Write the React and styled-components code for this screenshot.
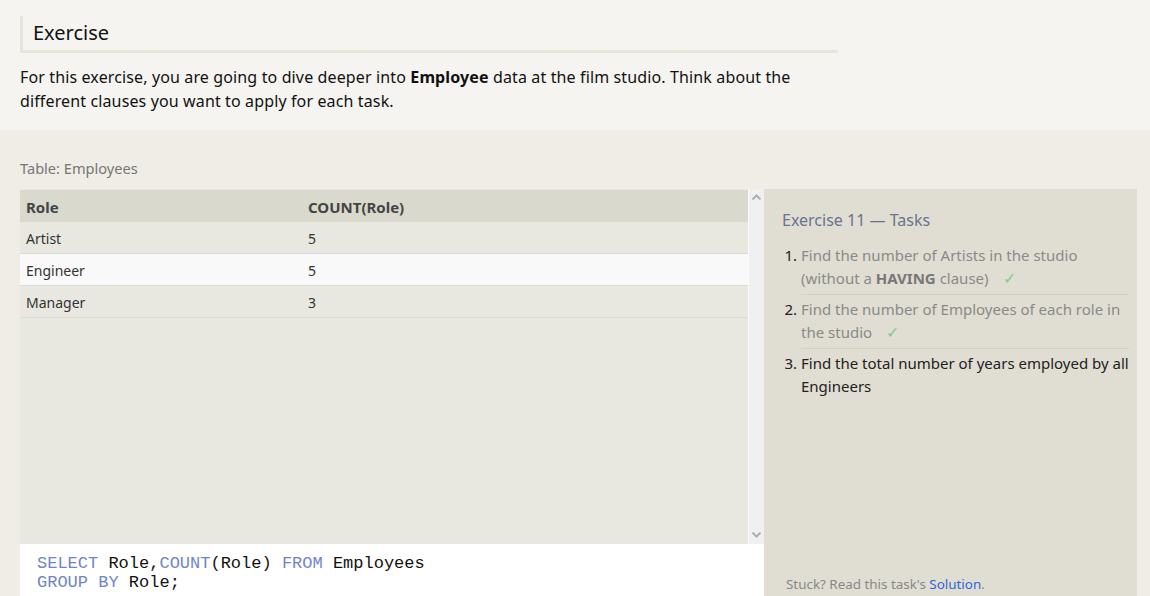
import styled, { createGlobalStyle } from "styled-components";

const rows = [
    { role: "Artist", count: 5 },
    { role: "Engineer", count: 5 },
    { role: "Manager", count: 3 },
];

//!styles----------------------------------------------
const GlobalStyle = createGlobalStyle`
    html, body {
        margin: 0;
        padding: 0;
        background: #efede6;
        font-family: "Noto Sans", "Open Sans", sans-serif;
        color: #111;
    }
`;

const Page = styled.div`
    width: 1150px;
    height: 596px;
    overflow: hidden;
`;

const Intro = styled.section`
    background: #f5f4f0;
    height: 130px;
    box-sizing: border-box;
    padding: 16px 20px 0;
`;

const Heading = styled.h2`
    width: 818px;
    box-sizing: border-box;
    margin: 0;
    padding: 4px 10px 5px;
    border-left: 3px solid #e8e6da;
    border-bottom: 3px solid #e8e6da;
    font-size: 20px;
    font-weight: 400;
    line-height: 25px;
`;

const Lead = styled.p`
    margin: 12px 0 0;
    width: 800px;
    font-size: 16px;
    letter-spacing: 0.13px;
    line-height: 24px;

    b {
        font-weight: 700;
    }
`;

const Workspace = styled.section`
    padding: 28px 13px 0 20px;
`;

const Caption = styled.div`
    font-size: 14.6px;
    line-height: 20px;
    color: #777;
    margin-bottom: 11px;
`;

const Split = styled.div`
    display: flex;
`;

const LeftCol = styled.div`
    width: 744px;
    display: flex;
    flex-direction: column;
`;

const TableWrap = styled.div`
    height: 355px;
    display: flex;
    background: #e9e8e0;
`;

const Table = styled.div`
    flex: 1;
`;

const Row = styled.div`
    display: grid;
    grid-template-columns: 282px 1fr;
    height: 32px;
    align-items: center;
    padding: 2px 0 0 6px;
    font-size: ${(p) => (p.$head ? "15px" : "14px")};
    color: ${(p) => (p.$head ? "#444" : "#333")};
    font-weight: ${(p) => (p.$head ? 700 : 400)};
    background: ${(p) =>
        p.$head ? "#dad9cd" : p.$alt ? "#f9f9f9" : "#e9e8e0"};
    border-bottom: ${(p) => (p.$head ? "none" : "1px solid #dcdcd6")};
    box-sizing: border-box;
    margin-top: ${(p) => (p.$head ? "1px" : "0")};
`;

const Scrollbar = styled.div`
    width: 16px;
    border-left: 1px solid #fafafa;
    background: #f0f0f0;
    display: flex;
    flex-direction: column;
    justify-content: space-between;
    align-items: center;
    padding: 5px 0 6px;
    box-sizing: border-box;
`;

const Editor = styled.pre`
    margin: 0;
    background: #fff;
    height: 60px;
    padding: 10px 17px 0;
    font-family: "Liberation Mono", "Courier New", monospace;
    font-size: 17px;
    line-height: 19px;
    color: #111;
`;

const Kw = styled.span`
    color: #7085c8;
`;

const Panel = styled.aside`
    width: 373px;
    height: 420px;
    background: #e0ded2;
    box-sizing: border-box;
    padding: 20px 8px 0 18px;
    display: flex;
    flex-direction: column;
`;

const PanelTitle = styled.div`
    font-size: 16px;
    color: #6a7390;
    line-height: 22px;
`;

const TaskList = styled.ol`
    margin: 13px 0 0;
    padding: 0 0 0 19px;
    color: #222;
`;

const Task = styled.li`
    font-size: 15px;
    line-height: 23px;
    padding: 0 0 4px 0;
    margin-bottom: 3px;
    border-bottom: ${(p) => (p.$last ? "none" : "1px solid #d3d1c5")};

    &::marker {
        color: #222;
    }
`;

const TaskText = styled.span`
    color: ${(p) => (p.$done ? "#8a8a8a" : "#222")};

    b {
        font-weight: 700;
        color: #777;
    }
`;

const Check = styled.span`
    color: #86c98e;
    margin-left: 14px;
    font-size: 16px;
`;

const Stuck = styled.div`
    margin-top: auto;
    margin-bottom: 16px;
    padding-left: 4px;
    font-size: 13.4px;
    color: #888;

    a {
        color: #3366dd;
        text-decoration: none;
    }
`;

const Arrow = ({ down }) => (
    <svg width="9" height="6" viewBox="0 0 9 6">
        <path
            d={down ? "M0.5 0.5 L4.5 4.5 L8.5 0.5" : "M0.5 5.5 L4.5 1.5 L8.5 5.5"}
            fill="none"
            stroke="#b0b0b0"
            strokeWidth="2"
        />
    </svg>
);

const App = () => {
    return (
        <Page>
            <GlobalStyle />
            <Intro>
                <Heading>Exercise</Heading>
                <Lead>
                    For this exercise, you are going to dive deeper into{" "}
                    <b>Employee</b> data at the film studio. Think about the
                    different clauses you want to apply for each task.
                </Lead>
            </Intro>
            <Workspace>
                <Caption>Table: Employees</Caption>
                <Split>
                    <LeftCol>
                        <TableWrap>
                            <Table>
                                <Row $head>
                                    <span>Role</span>
                                    <span>COUNT(Role)</span>
                                </Row>
                                {rows.map((r, i) => (
                                    <Row key={r.role} $alt={i % 2 === 1}>
                                        <span>{r.role}</span>
                                        <span>{r.count}</span>
                                    </Row>
                                ))}
                            </Table>
                            <Scrollbar>
                                <Arrow />
                                <Arrow down />
                            </Scrollbar>
                        </TableWrap>
                        <Editor>
                            <Kw>SELECT</Kw> Role,<Kw>COUNT</Kw>(Role) <Kw>FROM</Kw> Employees
                            {"\n"}
                            <Kw>GROUP BY</Kw> Role;
                        </Editor>
                    </LeftCol>
                    <Panel>
                        <PanelTitle>Exercise 11 — Tasks</PanelTitle>
                        <TaskList>
                            <Task>
                                <TaskText $done>
                                    Find the number of Artists in the studio
                                    (without a <b>HAVING</b> clause)
                                </TaskText>
                                <Check>✓</Check>
                            </Task>
                            <Task>
                                <TaskText $done>
                                    Find the number of Employees of each role in
                                    the studio
                                </TaskText>
                                <Check>✓</Check>
                            </Task>
                            <Task $last>
                                <TaskText>
                                    Find the total number of years employed by
                                    all Engineers
                                </TaskText>
                            </Task>
                        </TaskList>
                        <Stuck>
                            Stuck? Read this task's <a href="#">Solution</a>.
                        </Stuck>
                    </Panel>
                </Split>
            </Workspace>
        </Page>
    );
};

export default App;
